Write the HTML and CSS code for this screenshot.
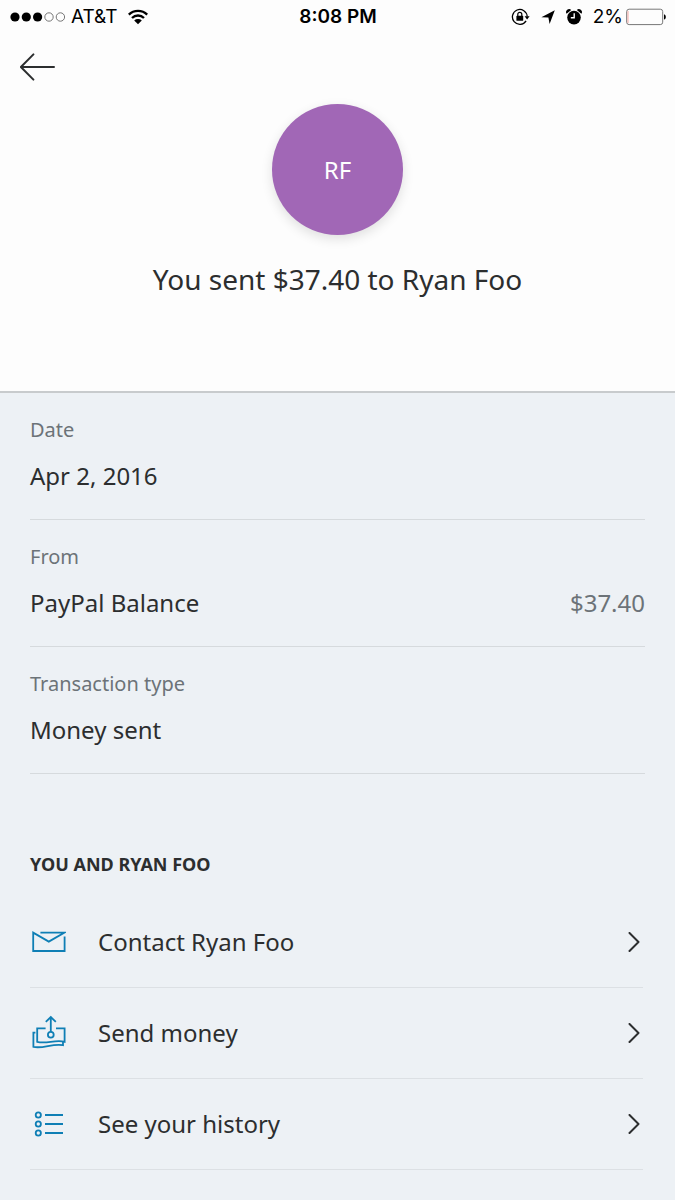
FILE: index.html
```html
<!DOCTYPE html>
<html lang="en">
<head>
    <meta charset="UTF-8">
    <meta name="viewport" content="width=device-width, initial-scale=1.0">
    <title>Transaction details</title>
    <link rel="stylesheet" href="styles.css">
</head>
<body>
    <header class="top">
        <div class="status-bar">
            <div class="status-left">
                <svg class="signal" width="56" height="12" viewBox="0 0 56 12" aria-hidden="true">
                    <circle cx="5" cy="6" r="4.6"/>
                    <circle cx="16.3" cy="6" r="4.6"/>
                    <circle cx="27.6" cy="6" r="4.6"/>
                    <circle class="empty" cx="39" cy="6" r="4.2"/>
                    <circle class="empty" cx="50.4" cy="6" r="4.2"/>
                </svg>
                <span>AT&amp;T</span>
                <svg class="wifi" width="20" height="16" viewBox="0 0 20 16" aria-hidden="true">
                    <path d="M0.8 5.6a13.2 13.2 0 0 1 18.4 0M4 9a8.6 8.6 0 0 1 12 0"/>
                    <path class="fill" d="M6.2 11.4a5.6 5.6 0 0 1 7.6 0L10 15.2z"/>
                </svg>
            </div>
            <span class="time">8:08 PM</span>
            <div class="status-right">
                <svg width="19" height="18" viewBox="0 0 19 18" aria-hidden="true">
                    <path d="M15.1 12.8A7.4 7.4 0 1 1 16.2 8.5" fill="none" stroke="#000" stroke-width="1.3"/>
                    <path d="M13.6 8.2h5l-2.5 3.2z"/>
                    <rect x="5.4" y="7.8" width="6.8" height="5" rx="0.6"/>
                    <path d="M6.8 8V6.3a2 2 0 0 1 4 0V8" fill="none" stroke="#000" stroke-width="1.2"/>
                </svg>
                <svg width="14" height="16" viewBox="0 0 14 16" aria-hidden="true">
                    <path d="M13.8 1.2L8.6 15L7.4 8.6L0.4 8.2z"/>
                </svg>
                <svg width="16" height="18" viewBox="0 0 16 18" aria-hidden="true">
                    <circle cx="8" cy="9.6" r="6.8"/>
                    <path d="M0.6 5.8A3 3 0 0 1 5.2 2zM15.4 5.8A3 3 0 0 0 10.8 2z"/>
                    <path d="M8.2 5.2v4.6H4.8" fill="none" stroke="#fff" stroke-width="1.4"/>
                </svg>
                <span>2%</span>
                <svg class="battery" width="40" height="18" viewBox="0 0 40 18" aria-hidden="true">
                    <rect x="0.7" y="1.2" width="36" height="15.4" rx="2.4" fill="none" stroke="#777" stroke-width="1"/>
                    <path d="M2 3v12" stroke="#f6aaa6" stroke-width="1"/>
                    <path d="M38 6.2c2.4 0.6 2.4 4.8 0 5.4z"/>
                </svg>
            </div>
        </div>
        <nav class="nav">
            <button class="back" type="button" aria-label="Back">
                <svg width="36" height="28" viewBox="0 0 36 28" aria-hidden="true">
                    <path d="M13.4 1.4L0.9 14L13.4 26.6M0.9 14H34"/>
                </svg>
            </button>
        </nav>
        <div class="hero">
            <div class="avatar">RF</div>
            <h1>You sent $37.40 to Ryan Foo</h1>
        </div>
    </header>

    <main class="details">
        <dl class="info">
            <div class="info-item">
                <dt>Date</dt>
                <dd>Apr 2, 2016</dd>
            </div>
            <div class="info-item">
                <dt>From</dt>
                <dd>PayPal Balance <span class="amount">$37.40</span></dd>
            </div>
            <div class="info-item">
                <dt>Transaction type</dt>
                <dd>Money sent</dd>
            </div>
        </dl>

        <h2>YOU AND RYAN FOO</h2>
        <ul class="actions">
            <li>
                <a href="#contact">
                    <svg class="icon" width="36" height="36" viewBox="0 0 36 36" aria-hidden="true">
                        <path d="M10.4 8.6H34.6L18.8 17.6L3.2 8.6V27H34.6V12.6"/>
                    </svg>
                    <span>Contact Ryan Foo</span>
                    <svg class="chevron" width="12" height="20" viewBox="0 0 12 20" aria-hidden="true"><path d="M1.5 1L10.5 10L1.5 19"/></svg>
                </a>
            </li>
            <li>
                <a href="#send">
                    <svg class="icon" width="36" height="36" viewBox="0 0 36 36" aria-hidden="true">
                        <path d="M15.6 13.4H7.2V26.8C16 29.4 25 24.4 34.6 26.8V13.4H26"/>
                        <path d="M5.4 17.6H3.4V31.8C12.5 34.2 23 28 33 30.2V26.8"/>
                        <circle cx="20.8" cy="19.8" r="2.9"/>
                        <path d="M20.8 16.9V2.2M15.8 6.8L20.8 2L25.8 6.8"/>
                    </svg>
                    <span>Send money</span>
                    <svg class="chevron" width="12" height="20" viewBox="0 0 12 20" aria-hidden="true"><path d="M1.5 1L10.5 10L1.5 19"/></svg>
                </a>
            </li>
            <li>
                <a href="#history">
                    <svg class="icon" width="36" height="36" viewBox="0 0 36 36" aria-hidden="true">
                        <circle cx="8.3" cy="9" r="2.6"/>
                        <circle cx="8.3" cy="18" r="2.6"/>
                        <circle cx="8.3" cy="27" r="2.6"/>
                        <path d="M15 9H33M15 18H33M15 27H33"/>
                    </svg>
                    <span>See your history</span>
                    <svg class="chevron" width="12" height="20" viewBox="0 0 12 20" aria-hidden="true"><path d="M1.5 1L10.5 10L1.5 19"/></svg>
                </a>
            </li>
        </ul>
    </main>
</body>
</html>
```
FILE: styles.css
```css
* {
    box-sizing: border-box;
}
body {
    margin: 0;
    min-height: 100vh;
    background-color: #edf1f5;
    color: #2c2e2f;
    font-family: "Noto Sans", sans-serif;
    font-size: 24px;
    line-height: 32px;
}
svg {
    display: block;
    flex: none;
}

/* top area */
.top {
    background-color: #fdfdfd;
    border-bottom: 2px solid #c8cbcd;
    padding-bottom: 93px;
}
.status-bar {
    display: grid;
    grid-template-columns: 1fr auto 1fr;
    align-items: center;
    height: 34px;
    padding: 0 9px 0 10px;
    color: #000;
    font-family: Inter, sans-serif;
    font-size: 19px;
}
.status-left,
.status-right {
    display: flex;
    align-items: center;
}
.status-left {
    gap: 5px;
}
.status-left .wifi {
    margin-left: 5px;
}
.status-right {
    justify-content: flex-end;
    gap: 11px;
}
.status-right .battery {
    margin-left: -8px;
}
.signal .empty {
    fill: none;
    stroke: #555;
    stroke-width: 0.8;
}
.wifi path {
    fill: none;
    stroke: #000;
    stroke-width: 2.4;
}
.wifi .fill {
    fill: #000;
    stroke: none;
}
.time {
    font-weight: 600;
}
.nav {
    display: flex;
    align-items: center;
    height: 66px;
    padding: 0 20px;
}
.back {
    padding: 0;
    border: none;
    background: none;
    cursor: pointer;
}
.back path {
    fill: none;
    stroke: #2c2e2f;
    stroke-width: 2;
    stroke-linecap: round;
    stroke-linejoin: round;
}
.hero {
    display: flex;
    flex-direction: column;
    align-items: center;
    gap: 25px;
    padding-top: 4px;
}
.avatar {
    display: flex;
    justify-content: center;
    align-items: center;
    width: 131px;
    height: 131px;
    border-radius: 50%;
    background-color: #a167b6;
    color: #fff;
    box-shadow: 0 4px 12px rgba(0, 0, 0, 0.12);
}
h1 {
    margin: 0;
    font-size: 28px;
    font-weight: 400;
    line-height: 38px;
}

/* transaction info */
.details {
    padding: 0 30px;
}
.info {
    margin: 0;
}
.info-item {
    padding: 21px 0 27px;
    border-bottom: 1px solid #d6dadd;
}
dt {
    margin-bottom: 14px;
    color: #6c7378;
    font-size: 20px;
}
dd {
    display: flex;
    justify-content: space-between;
    margin: 0;
}
.amount {
    color: #6c7378;
}

/* links */
h2 {
    margin: 74px 0 17px;
    font-size: 18px;
    font-weight: 700;
}
.actions {
    margin: 0;
    padding: 0 2px 0 0;
    list-style: none;
}
.actions li {
    border-bottom: 1px solid #dce0e4;
}
.actions a {
    display: flex;
    align-items: center;
    height: 90px;
    padding-right: 3px;
    color: inherit;
    text-decoration: none;
}
.actions span {
    flex: 1;
    margin-left: 32px;
}
.icon {
    fill: none;
    stroke: #0f7fb5;
    stroke-width: 1.8;
}
.chevron {
    fill: none;
    stroke: #2c2e2f;
    stroke-width: 2;
    stroke-linecap: round;
    stroke-linejoin: round;
}
```
